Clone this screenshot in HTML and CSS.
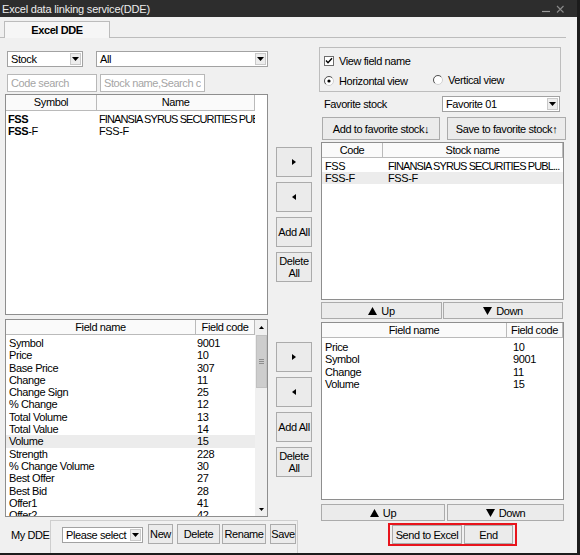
FILE: index.html
```html
<!DOCTYPE html>
<html lang="en">

<head>
    <meta charset="UTF-8">
    <meta name="viewport" content="width=device-width, initial-scale=1.0">
    <title>Excel data linking service(DDE)</title>
    <link rel="stylesheet" href="styles.css">
</head>

<body>
    <div class="window">
        <div class="titlebar">
            <span class="title">Excel data linking service(DDE)</span>
            <span class="win-ctrl">
                <svg width="30" height="17" viewBox="0 0 30 17">
                    <path d="M2 11.5 H10" stroke="#9a9a9a" stroke-width="1.2" />
                    <path d="M17 6 L23.5 12.5 M23.5 6 L17 12.5" stroke="#8a8a8a" stroke-width="1.1" />
                </svg>
            </span>
        </div>

        <div class="tabstrip">
            <div class="tab">Excel DDE</div>
        </div>

        <div class="main">
            <!-- left: stock search + field list -->
            <div class="col-left">
                <div class="filter-row">
                    <div class="combo combo-stock">
                        <div class="combo-text">Stock</div>
                        <div class="combo-btn"><svg width="7" height="4" viewBox="0 0 7 4"><path d="M0 0 H7 L3.5 4 Z" /></svg></div>
                    </div>
                    <div class="combo combo-all">
                        <div class="combo-text">All</div>
                        <div class="combo-btn"><svg width="7" height="4" viewBox="0 0 7 4"><path d="M0 0 H7 L3.5 4 Z" /></svg></div>
                    </div>
                </div>
                <div class="search-row">
                    <input class="search search-code" placeholder="Code search">
                    <input class="search search-name" placeholder="Stock name,Search code">
                </div>

                <div class="list list-stock">
                    <div class="list-head">
                        <div class="cell c-symbol">Symbol</div>
                        <div class="cell c-name">Name</div>
                    </div>
                    <div class="list-body">
                        <div class="row">
                            <div class="cell c-symbol"><b>FSS</b></div>
                            <div class="cell c-name caps">FINANSIA SYRUS SECURITIES PUBLIC</div>
                        </div>
                        <div class="row">
                            <div class="cell c-symbol"><b>FSS</b>-F</div>
                            <div class="cell c-name">FSS-F</div>
                        </div>
                    </div>
                </div>

                <div class="list list-fields">
                    <div class="fields-table">
                        <div class="list-head">
                            <div class="cell c-fname">Field name</div>
                            <div class="cell c-fcode">Field code</div>
                        </div>
                        <div class="list-body">
                            <div class="row"><div class="cell c-fname">Symbol</div><div class="cell c-fcode">9001</div></div>
                            <div class="row"><div class="cell c-fname">Price</div><div class="cell c-fcode">10</div></div>
                            <div class="row"><div class="cell c-fname">Base Price</div><div class="cell c-fcode">307</div></div>
                            <div class="row"><div class="cell c-fname">Change</div><div class="cell c-fcode">11</div></div>
                            <div class="row"><div class="cell c-fname">Change Sign</div><div class="cell c-fcode">25</div></div>
                            <div class="row"><div class="cell c-fname">% Change</div><div class="cell c-fcode">12</div></div>
                            <div class="row"><div class="cell c-fname">Total Volume</div><div class="cell c-fcode">13</div></div>
                            <div class="row"><div class="cell c-fname">Total Value</div><div class="cell c-fcode">14</div></div>
                            <div class="row hover"><div class="cell c-fname">Volume</div><div class="cell c-fcode">15</div></div>
                            <div class="row"><div class="cell c-fname">Strength</div><div class="cell c-fcode">228</div></div>
                            <div class="row"><div class="cell c-fname">% Change Volume</div><div class="cell c-fcode">30</div></div>
                            <div class="row"><div class="cell c-fname">Best Offer</div><div class="cell c-fcode">27</div></div>
                            <div class="row"><div class="cell c-fname">Best Bid</div><div class="cell c-fcode">28</div></div>
                            <div class="row"><div class="cell c-fname">Offer1</div><div class="cell c-fcode">41</div></div>
                            <div class="row"><div class="cell c-fname">Offer2</div><div class="cell c-fcode">42</div></div>
                        </div>
                    </div>
                    <div class="vscroll">
                        <div class="vs-arrow"><svg width="5" height="3" viewBox="0 0 5 3"><path d="M2.5 0 L5 3 H0 Z" /></svg></div>
                        <div class="vs-thumb">
                            <svg width="5" height="5" viewBox="0 0 5 5"><path d="M0 0.5 H5 M0 2.5 H5 M0 4.5 H5" stroke="#8d8d8d" /></svg>
                        </div>
                        <div class="vs-space"></div>
                        <div class="vs-arrow"><svg width="5" height="3" viewBox="0 0 5 3"><path d="M0 0 H5 L2.5 3 Z" /></svg></div>
                    </div>
                </div>
            </div>

            <!-- middle: move buttons -->
            <div class="col-mid">
                <div class="mid-group mid-top">
                    <button class="btn mid-btn"><svg width="4" height="6" viewBox="0 0 4 6"><path d="M0 0 L4 3 L0 6 Z" /></svg></button>
                    <button class="btn mid-btn"><svg width="4" height="6" viewBox="0 0 4 6"><path d="M4 0 L0 3 L4 6 Z" /></svg></button>
                    <button class="btn mid-btn">Add All</button>
                    <button class="btn mid-btn">Delete<br>All</button>
                </div>
                <div class="mid-group mid-bottom">
                    <button class="btn mid-btn"><svg width="4" height="6" viewBox="0 0 4 6"><path d="M0 0 L4 3 L0 6 Z" /></svg></button>
                    <button class="btn mid-btn"><svg width="4" height="6" viewBox="0 0 4 6"><path d="M4 0 L0 3 L4 6 Z" /></svg></button>
                    <button class="btn mid-btn">Add All</button>
                    <button class="btn mid-btn">Delete<br>All</button>
                </div>
            </div>

            <!-- right: favorites + selected fields -->
            <div class="col-right">
                <div class="view-box">
                    <div class="opt-row">
                        <label class="opt">
                            <svg width="10" height="10" viewBox="0 0 10 10">
                                <rect x="0.5" y="0.5" width="9" height="9" fill="#fff" stroke="#6e6e6e" />
                                <path d="M2 4.5 L4 6.7 L8 2.3" fill="none" stroke="#000" stroke-width="1.4" />
                            </svg>
                            View field name
                        </label>
                    </div>
                    <div class="opt-row">
                        <label class="opt opt-horizontal">
                            <svg width="10" height="10" viewBox="0 0 10 10">
                                <circle cx="5" cy="5" r="4.5" fill="#fff" stroke="#d0d0d0" />
                                <path d="M1.8 8.2 A4.5 4.5 0 0 1 8.2 1.8" fill="none" stroke="#555" />
                                <circle cx="5" cy="5" r="1.6" fill="#000" />
                            </svg>
                            Horizontal view
                        </label>
                        <label class="opt opt-vertical">
                            <svg width="10" height="10" viewBox="0 0 10 10">
                                <circle cx="5" cy="5" r="4.5" fill="#fff" stroke="#d0d0d0" />
                                <path d="M1.8 8.2 A4.5 4.5 0 0 1 8.2 1.8" fill="none" stroke="#555" />
                            </svg>
                            Vertical view
                        </label>
                    </div>
                </div>

                <div class="fav-row">
                    <span class="fav-label">Favorite stock</span>
                    <div class="combo combo-fav">
                        <div class="combo-text">Favorite 01</div>
                        <div class="combo-btn"><svg width="7" height="4" viewBox="0 0 7 4"><path d="M0 0 H7 L3.5 4 Z" /></svg></div>
                    </div>
                </div>

                <div class="fav-buttons">
                    <button class="btn btn-add">Add to favorite stock&#8595;</button>
                    <button class="btn btn-save">Save to favorite stock&#8593;</button>
                </div>

                <div class="list list-fav">
                    <div class="list-head">
                        <div class="cell c-code">Code</div>
                        <div class="cell c-sname">Stock name</div>
                    </div>
                    <div class="list-body">
                        <div class="row">
                            <div class="cell c-code">FSS</div>
                            <div class="cell c-sname caps">FINANSIA SYRUS SECURITIES PUBL...</div>
                        </div>
                        <div class="row hover">
                            <div class="cell c-code">FSS-F</div>
                            <div class="cell c-sname">FSS-F</div>
                        </div>
                    </div>
                </div>
                <div class="updown updown-top">
                    <button class="btn btn-up"><svg width="9" height="8" viewBox="0 0 9 8"><path d="M4.5 0 L9 8 H0 Z" /></svg>Up</button>
                    <button class="btn btn-down"><svg width="9" height="8" viewBox="0 0 9 8"><path d="M0 0 H9 L4.5 8 Z" /></svg>Down</button>
                </div>

                <div class="list list-selected">
                    <div class="list-head">
                        <div class="cell c-sfname">Field name</div>
                        <div class="cell c-sfcode">Field code</div>
                    </div>
                    <div class="list-body">
                        <div class="row"><div class="cell c-sfname">Price</div><div class="cell c-sfcode">10</div></div>
                        <div class="row"><div class="cell c-sfname">Symbol</div><div class="cell c-sfcode">9001</div></div>
                        <div class="row"><div class="cell c-sfname">Change</div><div class="cell c-sfcode">11</div></div>
                        <div class="row"><div class="cell c-sfname">Volume</div><div class="cell c-sfcode">15</div></div>
                    </div>
                </div>
                <div class="updown updown-bottom">
                    <button class="btn btn-up2"><svg width="9" height="8" viewBox="0 0 9 8"><path d="M4.5 0 L9 8 H0 Z" /></svg>Up</button>
                    <button class="btn btn-down2"><svg width="9" height="8" viewBox="0 0 9 8"><path d="M0 0 H9 L4.5 8 Z" /></svg>Down</button>
                </div>
            </div>
        </div>

        <div class="footer">
            <span class="mydde-label">My DDE</span>
            <div class="mydde-panel">
                <div class="combo combo-mydde">
                    <div class="combo-text">Please select</div>
                    <div class="combo-btn"><svg width="7" height="4" viewBox="0 0 7 4"><path d="M0 0 H7 L3.5 4 Z" /></svg></div>
                </div>
                <button class="btn btn-new">New</button>
                <button class="btn btn-delete">Delete</button>
                <button class="btn btn-rename">Rename</button>
                <button class="btn btn-savedde">Save</button>
            </div>
            <div class="send-box">
                <button class="btn btn-send">Send to Excel</button>
                <button class="btn btn-end">End</button>
            </div>
        </div>
    </div>
</body>

</html>
```

FILE: styles.css
```css
* {
    box-sizing: border-box;
}

body {
    margin: 0;
    background: #fff;
    font: 11px "Liberation Sans", Arial, sans-serif;
    letter-spacing: -0.4px;
    color: #000;
}

.window {
    width: 580px;
    height: 555px;
    background: #f0f0f0;
    border-right: 3px solid #1c1c1c;
    border-bottom: 2px solid #1c1c1c;
    overflow: hidden;
}

/* title bar */
.titlebar {
    height: 17px;
    background: #2d2d2d;
    color: #ececec;
    display: flex;
    align-items: center;
    justify-content: space-between;
    padding-left: 2px;
}

.title {
    letter-spacing: -0.2px;
}

.win-ctrl {
    display: flex;
    margin-right: 7px;
}

/* tabs */
.tabstrip {
    width: 566px;
    height: 21px;
    padding: 4px 0 0 4px;
    border-bottom: 1px solid #bcbcbc;
}

.tab {
    width: 106px;
    height: 17px;
    border: 1px solid #bcbcbc;
    border-bottom: none;
    background: #f6f6f6;
    font-weight: bold;
    text-align: center;
    line-height: 16px;
}

.main {
    display: flex;
    align-items: flex-start;
    height: 480px;
}

/* combo boxes */
.combo {
    display: flex;
    height: 16px;
    background: #fff;
    border: 1px solid #a2a2a2;
}

.combo-text {
    flex: 1;
    padding-left: 3px;
    line-height: 14px;
    white-space: nowrap;
    overflow: hidden;
}

.combo-btn {
    width: 11px;
    margin: 1px;
    background: #ededed;
    border: 1px solid #c9c9c9;
    display: flex;
    align-items: center;
    justify-content: center;
}

/* buttons */
.btn {
    margin: 0;
    padding: 0;
    font: inherit;
    letter-spacing: inherit;
    color: #000;
    background: #ebebeb;
    border: 1px solid #ababab;
    display: flex;
    align-items: center;
    justify-content: center;
    text-align: center;
    white-space: nowrap;
}

/* left column */
.col-left {
    width: 263px;
    margin-left: 5px;
}

.filter-row {
    display: flex;
    margin-top: 13px;
}

.combo-stock {
    width: 76px;
    margin-left: 2px;
}

.combo-all {
    width: 172px;
    margin-left: 13px;
}

.search-row {
    display: flex;
    margin-top: 7px;
}

.search {
    height: 18px;
    margin: 0;
    padding: 0 3px;
    border: 1px solid #b8b8b8;
    background: #fff;
    font: inherit;
    letter-spacing: inherit;
    color: #000;
    outline: none;
}

.search::placeholder {
    color: #a5a5a5;
}

.search-code {
    width: 90px;
    margin-left: 2px;
}

.search-name {
    width: 105px;
    margin-left: 3px;
}

/* lists */
.list {
    background: #fff;
    border: 1px solid #8e8e8e;
    overflow: hidden;
}

.list-head {
    display: flex;
    height: 15px;
}

.list-head .cell {
    border-right: 1px solid #bababa;
    border-bottom: 1px solid #bababa;
    text-align: center;
    line-height: 14px;
    background: #fafafa;
}

.list-body {
    padding-top: 2px;
}

.row {
    display: flex;
    height: 12px;
    line-height: 12px;
    white-space: nowrap;
}

.row .cell {
    overflow: hidden;
}

.row .caps {
    letter-spacing: -0.9px;
}

.row.hover {
    background: #ececec;
}

.list-stock {
    height: 221px;
    margin-top: 2px;
}

.list-stock .list-head {
    height: 16px;
}

.list-stock .list-head .cell {
    line-height: 15px;
}

.c-symbol {
    width: 91px;
}

.c-name {
    width: 158px;
}

.list-stock .row .cell {
    padding-left: 2px;
}

.list-fields {
    display: flex;
    height: 198px;
    margin-top: 4px;
}

.fields-table {
    width: 249px;
}

.list-fields .row {
    height: 12.3px;
    line-height: 12.3px;
}

.c-fname {
    width: 190px;
}

.c-fcode {
    width: 59px;
}

.list-fields .row .c-fname {
    padding-left: 3px;
}

.list-fields .row .c-fcode {
    padding-left: 1px;
}

.vscroll {
    width: 13px;
    background: #f0f0f0;
    display: flex;
    flex-direction: column;
    align-items: center;
}

.vs-arrow {
    height: 14px;
    display: flex;
    align-items: center;
    justify-content: center;
}

.vs-thumb {
    width: 11px;
    height: 53px;
    margin-top: 1px;
    background: #cdcdcd;
    border: 1px solid #c1c1c1;
    display: flex;
    align-items: center;
    justify-content: center;
}

.vs-space {
    flex: 1;
}

/* middle column */
.col-mid {
    width: 36px;
    margin-left: 8px;
}

.mid-group {
    display: flex;
    flex-direction: column;
    gap: 5px;
}

.mid-top {
    margin-top: 109px;
}

.mid-bottom {
    margin-top: 60px;
}

.mid-btn {
    width: 36px;
    height: 30px;
    line-height: 12px;
}

/* right column */
.col-right {
    width: 247px;
    margin-left: 7px;
}

.view-box {
    width: 242px;
    height: 45px;
    margin-top: 9px;
    border: 1px solid #bdbdbd;
    padding: 7px 0 0 4px;
}

.opt-row {
    display: flex;
    height: 12px;
    margin-bottom: 8px;
}

.opt {
    display: flex;
    align-items: center;
    gap: 5px;
    line-height: 12px;
}

.opt-horizontal {
    width: 109px;
}

.opt-vertical {
    margin-top: -2px;
}

.fav-row {
    display: flex;
    height: 16px;
    margin-top: 4px;
}

.fav-label {
    padding-left: 5px;
    line-height: 17px;
}

.combo-fav {
    width: 118px;
    margin-left: auto;
    margin-right: 6px;
}

.fav-buttons {
    display: flex;
    height: 23px;
    margin-top: 5px;
}

.btn-add {
    width: 118px;
    margin-left: 3px;
}

.btn-save {
    width: 119px;
    margin-left: 7px;
}

.list-fav {
    width: 243px;
    height: 158px;
    margin: 2px 0 0 2px;
}

.c-code {
    width: 61px;
}

.c-sname {
    flex: 1;
}

.list-fav .row .c-code {
    padding-left: 3px;
}

.list-fav .row .c-sname {
    padding-left: 5px;
}

.updown {
    display: flex;
    height: 17px;
}

.updown .btn {
    gap: 4px;
}

.updown-top {
    margin-top: 2px;
}

.btn-up {
    width: 121px;
    margin-left: 2px;
}

.btn-down {
    width: 120px;
    margin-left: 1px;
}

.list-selected {
    width: 243px;
    height: 178px;
    margin: 3px 0 0 2px;
}

.list-selected .list-body {
    padding-top: 3px;
}

.list-selected .row {
    height: 12.4px;
    line-height: 12.4px;
}

.c-sfname {
    width: 185px;
}

.c-sfcode {
    flex: 1;
}

.list-selected .row .c-sfname {
    padding-left: 3px;
}

.list-selected .row .c-sfcode {
    padding-left: 6px;
}

.updown-bottom {
    margin-top: 4px;
}

.btn-up2 {
    width: 124px;
    margin-left: 2px;
}

.btn-down2 {
    width: 117px;
    margin-left: 2px;
}

/* footer */
.footer {
    display: flex;
    height: 35px;
}

.mydde-label {
    width: 50px;
    padding-left: 11px;
    line-height: 35px;
    white-space: nowrap;
}

.mydde-panel {
    display: flex;
    align-items: flex-start;
    width: 248px;
    height: 33px;
    margin-top: 2px;
    padding-left: 11px;
    border: 1px solid #cecece;
    border-bottom: none;
}

.combo-mydde {
    width: 81px;
    margin-top: 6px;
}

.mydde-panel .btn {
    height: 20px;
    margin-top: 3px;
}

.btn-new {
    width: 25px;
    margin-left: 5px;
}

.btn-delete {
    width: 43px;
    margin-left: 4px;
}

.btn-rename {
    width: 44px;
    margin-left: 2px;
}

.btn-savedde {
    width: 26px;
    margin-left: 4px;
}

.send-box {
    display: flex;
    align-items: center;
    height: 23px;
    margin: 5px 0 0 90px;
    padding: 0 2px;
    border: 2px solid #e8141c;
}

.send-box .btn {
    height: 19px;
}

.btn-send {
    width: 70px;
}

.btn-end {
    width: 49px;
    margin-left: 2px;
}
```
